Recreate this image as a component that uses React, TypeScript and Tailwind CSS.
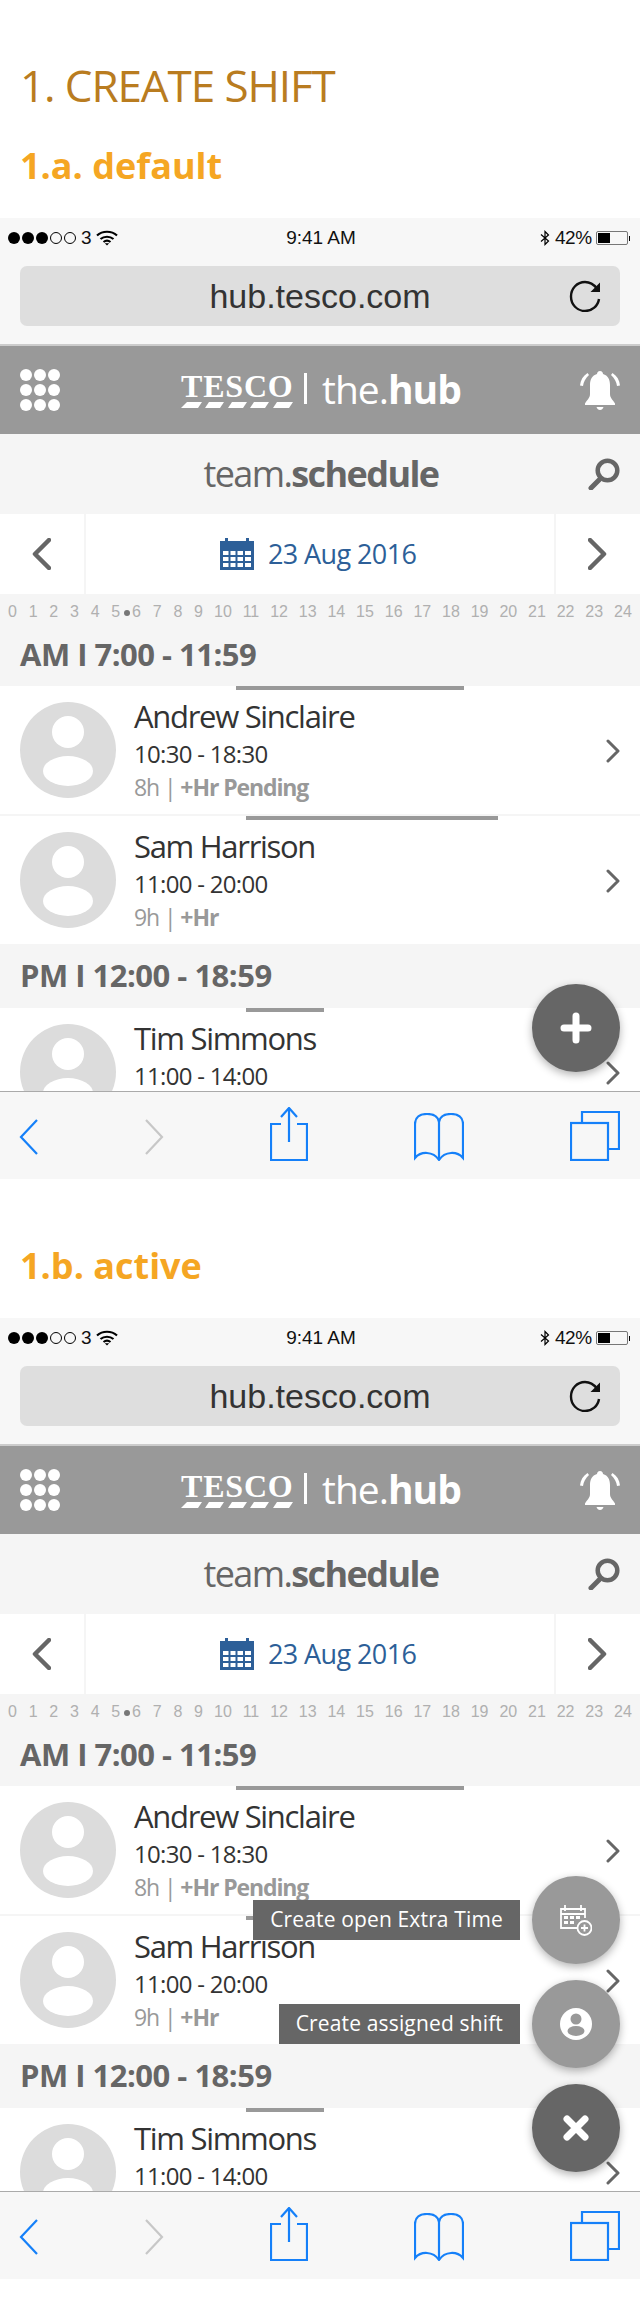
import React from 'react';

const hoursA = ['0', '1', '2', '3', '4', '5', '6', '7', '8', '9'];
const hoursB = ['10', '11', '12', '13', '14', '15', '16', '17', '18', '19', '20', '21', '22', '23', '24'];

const Wifi = () => (
  <svg width="22" height="16" viewBox="0 0 22 16" fill="none" stroke="#000" strokeWidth="2.2">
    <path d="M1 5.5C6.5 .5 15.5 .5 21 5.5" />
    <path d="M4.5 9C8 6 14 6 17.5 9" />
    <path d="M7.5 12C9.5 10.4 12.5 10.4 14.5 12" />
    <path d="M8.8 13.2L11 15.6L13.2 13.2Z" fill="#000" stroke="none" />
  </svg>
);

const StatusBar = () => (
  <div className="relative flex h-[48px] items-center justify-between pb-[8px] pl-2 pr-[10px] font-['Liberation_Sans',sans-serif] text-[19px] text-[#111]">
    <div className="flex items-center">
      <span className="h-3 w-3 rounded-full bg-black" />
      <span className="ml-[2px] h-3 w-3 rounded-full bg-black" />
      <span className="ml-[2px] h-3 w-3 rounded-full bg-black" />
      <span className="ml-[2px] h-3 w-3 rounded-full border border-black" />
      <span className="ml-[2px] h-3 w-3 rounded-full border border-black" />
      <span className="ml-[5px] w-[10px]">3</span>
      <span className="ml-[5px] flex"><Wifi /></span>
    </div>
    <span className="absolute left-[285px] w-[72px] whitespace-nowrap text-center text-[19px]">9:41 AM</span>
    <div className="flex items-center">
      <svg width="10" height="16" viewBox="0 0 10 16" fill="none" stroke="#000" strokeWidth="1.2">
        <path d="M1 4.5L8.5 11L5 14.5V1.5L8.5 5L1 11.5" />
      </svg>
      <span className="ml-[5px] w-[36px] text-[19px] tracking-[-0.5px]">42%</span>
      <span className="relative ml-[5px] h-[14px] w-[32px] rounded-[2px] border border-[#777]">
        <span className="absolute bottom-[1px] left-[1px] top-[1px] w-[12px] bg-black" />
      </span>
      <span className="ml-[1px] h-[5px] w-[1px] bg-black" />
    </div>
  </div>
);

const UrlBar = () => (
  <div className="relative mx-5 flex h-[60px] items-center justify-center rounded-[7px] bg-[#dedede] pt-[1px] font-['Liberation_Sans',sans-serif] text-[34px] text-[#333]">
    hub.tesco.com
    <svg className="absolute right-[19px] top-[14px]" width="32" height="32" viewBox="0 0 32 32" fill="none" stroke="#111" strokeWidth="2.4">
      <path d="M30 19C29 26 23 31 16 31C8 31 2 24.500 2 16.500C2 8.500 8 2 16 2C21 2 24.500 4 28 8.500" />
      <path d="M31 2.500V12H21.500Z" fill="#111" stroke="none" />
    </svg>
  </div>
);

const Bell = () => (
  <svg width="40" height="40" viewBox="0 0 40 40" fill="white">
    <path d="M20 1C22 1 23 2.500 23 4C28 5.500 30 9.500 30 15V24C30 28 33 30 35 33.500V35H5V33.500C7 30 10 28 10 24V15C10 9.500 12 5.500 17 4C17 2.500 18 1 20 1Z" />
    <path d="M16.500 37H23.500C23 39 21.500 40 20 40C18.500 40 17 39 16.500 37Z" />
    <path d="M7.500 3C3 6 .5 10 0 15.500L3 16C3.500 12 5.500 8 9 5Z" />
    <path d="M32.500 3C37 6 39.500 10 40 15.500L37 16C36.500 12 34.500 8 31 5Z" />
  </svg>
);

const TescoStripes = () => (
  <svg width="112" height="6" viewBox="0 0 112 6" fill="white">
    <path d="M0 6L6 0H21L17 6Z" />
    <path d="M24 6L28 0H43L39 6Z" />
    <path d="M47 6L51 0H66L62 6Z" />
    <path d="M69 6L73 0H88L84 6Z" />
    <path d="M92 6L96 0H112L108 6Z" />
  </svg>
);

const HubHeader = () => (
  <div className="relative flex h-[88px] items-center justify-between bg-[#999999] px-5">
    <div className="grid w-[40px] grid-cols-3 gap-x-[2px] gap-y-[3px]">
      {Array.from({ length: 9 }).map((_, i) => (
        <span key={i} className="h-3 w-3 rounded-full bg-white" />
      ))}
    </div>
    <div className="absolute left-[181px] top-[24px] flex text-white">
      <div className="flex w-[112px] flex-col items-start">
        <span className="h-[32px] w-[112px] whitespace-nowrap font-['Liberation_Serif',serif] text-[32px] font-bold leading-[32px] tracking-[0.8px]">TESCO</span>
        <TescoStripes />
      </div>
      <span className="ml-[11px] mt-[3px] h-[31px] w-[3px] bg-white" />
      <span className="ml-[15px] whitespace-nowrap font-['Open_Sans',sans-serif] text-[39px] leading-[38px] tracking-[-1px]">
        the.<span className="font-bold">hub</span>
      </span>
    </div>
    <Bell />
  </div>
);

const Search = () => (
  <svg className="absolute right-5 top-[24px]" width="32" height="32" viewBox="0 0 32 32" fill="none" stroke="#666" strokeWidth="4.500" strokeLinecap="round">
    <circle cx="19.500" cy="12.500" r="9.800" />
    <path d="M11 22L3 30" strokeWidth="5" />
  </svg>
);

const TitleBar = () => (
  <div className="relative flex h-[80px] items-center justify-center bg-[#f5f5f5] pl-[2px] font-['Open_Sans',sans-serif] text-[36px] tracking-[-1.6px] text-[#666]">
    team.<span className="font-bold">schedule</span>
    <Search />
  </div>
);

const Calendar = () => (
  <svg width="34" height="32" viewBox="0 0 34 32" fill="#2d5f98">
    <path d="M5 0H8V3H26V0H29V3H34V32H0V3H5Z" />
    <path fill="white" d="M3 13H8.500V17H3ZM10.500 13H15.500V17H10.500ZM17.500 13H23V17H17.500ZM25 13H31V17H25ZM3 19H8.500V23H3ZM10.500 19H15.500V23H10.500ZM17.500 19H23V23H17.500ZM25 19H31V23H25ZM3 25H8.500V29H3ZM10.500 25H15.500V29H10.500ZM17.500 25H23V29H17.500ZM25 25H31V29H25Z" />
  </svg>
);

const NavChevron = ({ left }: { left?: boolean }) => (
  <svg width="19" height="32" viewBox="0 0 19 32" fill="none" stroke="#666" strokeWidth="4.500" strokeLinecap="round" strokeLinejoin="round">
    <path d={left ? 'M17 2L3 16L17 30' : 'M2 2L16 16L2 30'} />
  </svg>
);

const DateNav = () => (
  <div className="flex h-[80px] bg-white">
    <div className="flex w-[84px] items-center pl-8">
      <NavChevron left />
    </div>
    <div className="flex flex-1 items-center border-x-2 border-[#f5f5f5] pl-[134px]">
      <Calendar />
      <span className="ml-[14px] whitespace-nowrap font-['Open_Sans',sans-serif] text-[27px] tracking-[-0.6px] text-[#2d5f98]">23 Aug 2016</span>
    </div>
    <div className="flex w-[84px] items-center justify-end pr-[33px]">
      <NavChevron />
    </div>
  </div>
);

const TimeAxis = () => (
  <div className="relative flex h-[30px] shrink-0 bg-[#f5f5f5] pl-2 pr-2 pt-[6px] font-['Liberation_Sans',sans-serif] text-[16px] leading-[24px] text-[#b0b0b0]">
    <div className="flex w-[195px] justify-between">
      {hoursA.map((h) => <span key={h}>{h}</span>)}
    </div>
    <div className="ml-[11px] flex flex-1 justify-between">
      {hoursB.map((h) => <span key={h}>{h}</span>)}
    </div>
    <span className="absolute left-[124px] top-[16px] h-[6px] w-[6px] rounded-full bg-[#777]" />
  </div>
);

const SectionHeader = ({ children, h }: { children: string; h: string }) => (
  <div className={`${h} flex items-center bg-[#f5f5f5] pb-[2px] pl-5 font-['Open_Sans',sans-serif] text-[31px] font-bold tracking-[-0.5px] text-[#666]`}>
    {children}
  </div>
);

const Avatar = () => (
  <svg className="shrink-0" width="96" height="96" viewBox="0 0 96 96">
    <circle cx="48" cy="48" r="48" fill="#dcdcdc" />
    <ellipse cx="48" cy="30" rx="16" ry="16" fill="white" />
    <ellipse cx="48" cy="69" rx="25" ry="15" fill="white" />
  </svg>
);

const RowChevron = () => (
  <svg className="absolute right-5 top-[53px]" width="14" height="24" viewBox="0 0 14 24" fill="none" stroke="#666" strokeWidth="3" strokeLinecap="round" strokeLinejoin="round">
    <path d="M2 2L12 12L2 22" />
  </svg>
);

interface ShiftRowProps {
  name: string;
  time: string;
  hours?: string;
  extra?: string;
  bar: string;
}

const ShiftRow: React.FC<ShiftRowProps> = ({ name, time, hours, extra, bar }) => (
  <div className="relative h-[128px] shrink-0 bg-white font-['Open_Sans',sans-serif]">
    <div className={`h-1 bg-[#999999] ${bar}`} />
    <div className="flex pl-5 pt-3">
      <Avatar />
      <div className="-mt-[4px] ml-[18px]">
        <div className="whitespace-nowrap text-[31px] leading-[36px] tracking-[-1.3px] text-[#333]">{name}</div>
        <div className="mt-[5px] whitespace-nowrap text-[24px] leading-[30px] tracking-[-0.7px] text-[#333]">{time}</div>
        {hours && (
          <div className="mt-[3px] whitespace-nowrap text-[23px] leading-[30px] tracking-[-1.1px] text-[#999999]">
            {hours} | <span className="font-bold">{extra}</span>
          </div>
        )}
      </div>
    </div>
    <RowChevron />
  </div>
);

const Toolbar = () => (
  <div className="flex h-[88px] shrink-0 items-start border-t border-[#aaaaaa] bg-[#f7f7f7] pl-[19px]">
    <svg className="mt-[27px]" width="19" height="36" viewBox="0 0 19 36" fill="none" stroke="#1580f9" strokeWidth="2.200">
      <path d="M18 1L2 18L18 35" />
    </svg>
    <svg className="ml-[107px] mt-[27px]" width="19" height="36" viewBox="0 0 19 36" fill="none" stroke="#c7c7c7" strokeWidth="2.200">
      <path d="M1 1L17 18L1 35" />
    </svg>
    <svg className="ml-[106px] mt-[15px]" width="38" height="54" viewBox="0 0 38 54" fill="none" stroke="#1580f9" strokeWidth="2.200">
      <path d="M11 17H1V53H37V17H27" />
      <path d="M19 1V35" />
      <path d="M11 10L19 1L27 10" />
    </svg>
    <svg className="ml-[106px] mt-[21px]" width="50" height="48" viewBox="0 0 50 48" fill="none" stroke="#1580f9" strokeWidth="2.200">
      <path d="M25 9C24 3 19 1 13 1C6 1 1 4 1 11V45C7 38 19 38 25 47C31 38 43 38 49 45V11C49 4 44 1 37 1C31 1 26 3 25 9Z" />
      <path d="M25 9V47" />
    </svg>
    <svg className="ml-[106px] mt-[19px]" width="50" height="50" viewBox="0 0 50 50" fill="none" stroke="#1580f9" strokeWidth="2.200">
      <path d="M12 12V1H49V38H39" />
      <rect x="1" y="12" width="37" height="37" />
    </svg>
  </div>
);

const Fab = ({ children, dark }: { children: React.ReactNode; dark?: boolean }) => (
  <div className={`flex h-[88px] w-[88px] items-center justify-center rounded-full shadow-[0_3px_8px_rgba(0,0,0,0.3)] ${dark ? 'bg-[#666666]' : 'bg-[#999999]'}`}>
    {children}
  </div>
);

const Tip = ({ children }: { children: string }) => (
  <div className="flex h-10 items-center whitespace-nowrap bg-[#666666] px-[17px] font-['Open_Sans',sans-serif] text-[21px] tracking-[0.15px] text-white">
    {children}
  </div>
);

const PlusIcon = () => (
  <svg width="32" height="32" viewBox="0 0 32 32" stroke="white" strokeWidth="7" strokeLinecap="round">
    <path d="M16 4V28M4 16H28" />
  </svg>
);

const CloseIcon = () => (
  <svg width="26" height="26" viewBox="0 0 26 26" stroke="white" strokeWidth="7" strokeLinecap="round">
    <path d="M4 4L22 22M22 4L4 22" />
  </svg>
);

const CalendarPlus = () => (
  <svg width="32" height="32" viewBox="0 0 32 32" fill="none" stroke="white" strokeWidth="1.800">
    <path d="M18 24H1V5H25V14" />
    <path d="M5 1V7M21 1V7M1 10H25" />
    <path fill="white" stroke="none" d="M4 12H8V15H4ZM10 12H14V15H10ZM16 12H20V15H16ZM4 17H8V20H4ZM10 17H14V20H10Z" />
    <circle cx="24.500" cy="24" r="7" />
    <path d="M24.500 20.500V27.500M21 24H28" />
  </svg>
);

const UserIcon = () => (
  <svg width="32" height="32" viewBox="0 0 32 32">
    <circle cx="16" cy="16" r="16" fill="white" />
    <ellipse cx="16" cy="11" rx="5.500" ry="5.500" fill="#999999" />
    <ellipse cx="16" cy="23" rx="8.500" ry="5" fill="#999999" />
  </svg>
);

const Phone = ({ active }: { active?: boolean }) => (
  <div className="relative flex h-[961px] flex-col overflow-hidden bg-[#f7f7f7]">
    <StatusBar />
    <UrlBar />
    <div className="mt-[18px] h-[2px] bg-[#cccccc]" />
    <HubHeader />
    <TitleBar />
    <DateNav />
    <div className="flex flex-1 flex-col overflow-hidden bg-white">
      <TimeAxis />
      <SectionHeader h="h-[62px] shrink-0">AM I 7:00 - 11:59</SectionHeader>
      <ShiftRow name="Andrew Sinclaire" time="10:30 - 18:30" hours="8h" extra="+Hr Pending" bar="ml-[236px] w-[228px]" />
      <div className="h-[2px] shrink-0 bg-[#f5f5f5]" />
      <ShiftRow name="Sam Harrison" time="11:00 - 20:00" hours="9h" extra="+Hr" bar="ml-[246px] w-[252px]" />
      <SectionHeader h="h-[64px] shrink-0">PM I 12:00 - 18:59</SectionHeader>
      <ShiftRow name="Tim Simmons" time="11:00 - 14:00" bar="ml-[246px] w-[78px]" />
    </div>
    <Toolbar />
    <div className="absolute bottom-[107px] right-5 flex flex-col items-end gap-4">
      {active && (
        <div className="flex items-center gap-3">
          <Tip>Create open Extra Time</Tip>
          <Fab><CalendarPlus /></Fab>
        </div>
      )}
      {active && (
        <div className="flex items-center gap-3">
          <Tip>Create assigned shift</Tip>
          <Fab><UserIcon /></Fab>
        </div>
      )}
      <Fab dark>{active ? <CloseIcon /> : <PlusIcon />}</Fab>
    </div>
  </div>
);

const SubHeading = ({ children }: { children: string }) => (
  <h2 className="pl-5 font-['Open_Sans',sans-serif] text-[36px] font-bold leading-[50px] text-[#f5a623]">
    {children}
  </h2>
);

export default function App() {
  return (
    <div className="h-[2306px] w-[640px] overflow-hidden bg-white">
      <div className="flex h-[218px] flex-col justify-end pb-[27px]">
        <h1 className="mb-[29px] pl-5 font-['Open_Sans',sans-serif] text-[44px] leading-[54px] tracking-[-1.1px] text-[#b97c20]">1. CREATE SHIFT</h1>
        <SubHeading>1.a. default</SubHeading>
      </div>
      <Phone />
      <div className="flex h-[139px] flex-col justify-end pb-[27px]">
        <SubHeading>1.b. active</SubHeading>
      </div>
      <Phone active />
    </div>
  );
}
